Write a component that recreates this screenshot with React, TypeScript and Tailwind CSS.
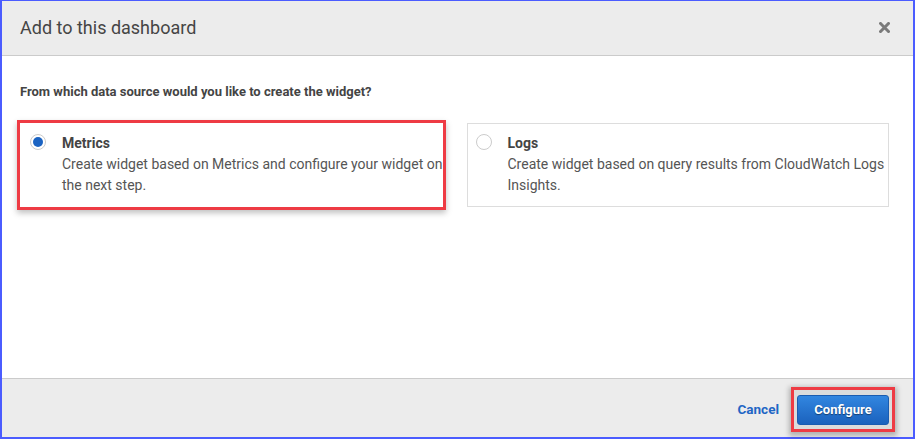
import React, { useState } from "react";

const options = [
  {
    id: "metrics",
    title: "Metrics",
    text: "Create widget based on Metrics and configure your widget on the next step.",
  },
  {
    id: "logs",
    title: "Logs",
    text: "Create widget based on query results from CloudWatch Logs Insights.",
  },
];

const App: React.FC = () => {
  const [source, setSource] = useState("metrics");

  return (
    <div className="w-[915px] h-[439px] flex flex-col bg-white border-t border-l-2 border-r-2 border-b-2 border-[#4b5cff] font-['Roboto','Liberation_Sans',sans-serif] text-[#444]">
      {/* header */}
      <div className="h-[55px] shrink-0 flex items-center justify-between pl-[18px] pr-[23px] pb-[1px] bg-[#ececec] border-b border-[#cbcbcb]">
        <h2 className="text-[18px] font-normal text-[#454545] leading-none">
          Add to this dashboard
        </h2>
        <svg width="11" height="11" viewBox="0 0 11 11" className="cursor-pointer">
          <path
            d="M1.5 1.5 L9.5 9.5 M9.5 1.5 L1.5 9.5"
            stroke="#7a7a7a"
            strokeWidth="3"
            strokeLinecap="square"
          />
        </svg>
      </div>

      {/* body */}
      <div className="flex-1 pl-[18px] pr-[24px] pt-[28px]">
        <p className="text-[13px] font-bold text-[#444] leading-4">
          From which data source would you like to create the widget?
        </p>
        <div className="grid grid-cols-2 gap-6 mt-[23px]">
          {options.map((o) => {
            const active = source === o.id;
            return (
              <label
                key={o.id}
                onClick={() => setSource(o.id)}
                className={`flex items-start h-[84px] cursor-pointer bg-white ${
                  active
                    ? "pt-[10px] pl-[10px] ring-[3px] ring-[#ee3b44] shadow-[0_3px_6px_3px_rgba(0,0,0,0.25)] relative"
                    : "pt-[9px] pl-[8px] border border-[#dddddd]"
                }`}
              >
                <span className="mt-[1px] w-4 h-4 shrink-0 rounded-full flex items-center justify-center border border-[#cccccc]">
                  {active && <span className="w-[10px] h-[10px] rounded-full bg-[#1b63c2]" />}
                </span>
                <div className="ml-[16px] text-[14px] leading-[21px]">
                  <div className="font-bold text-[#444]">{o.title}</div>
                  <div className="text-[#555]">{o.text}</div>
                </div>
              </label>
            );
          })}
        </div>
      </div>

      {/* footer */}
      <div className="h-[59px] shrink-0 flex items-center justify-end pt-[3px] pr-[18px] bg-[#ececec] border-t border-[#cbcbcb]">
        <button className="text-[13.5px] font-bold text-[#1f66c5] mr-[12px]">
          Cancel
        </button>
        <div className="border-[3px] border-[#ee3b44] px-[3px] pt-[5px] pb-[4px] bg-[#dcdcdc] shadow-[0_2px_5px_2px_rgba(0,0,0,0.25)]">
          <button className="block h-[30px] w-[92px] rounded-[3px] text-[13px] font-bold text-white bg-gradient-to-b from-[#3286e0] to-[#1b62bd] border border-[#1a5cb0] [text-shadow:0_1px_1px_rgba(0,0,0,0.45)]">
            Configure
          </button>
        </div>
      </div>
    </div>
  );
};

export default App;
